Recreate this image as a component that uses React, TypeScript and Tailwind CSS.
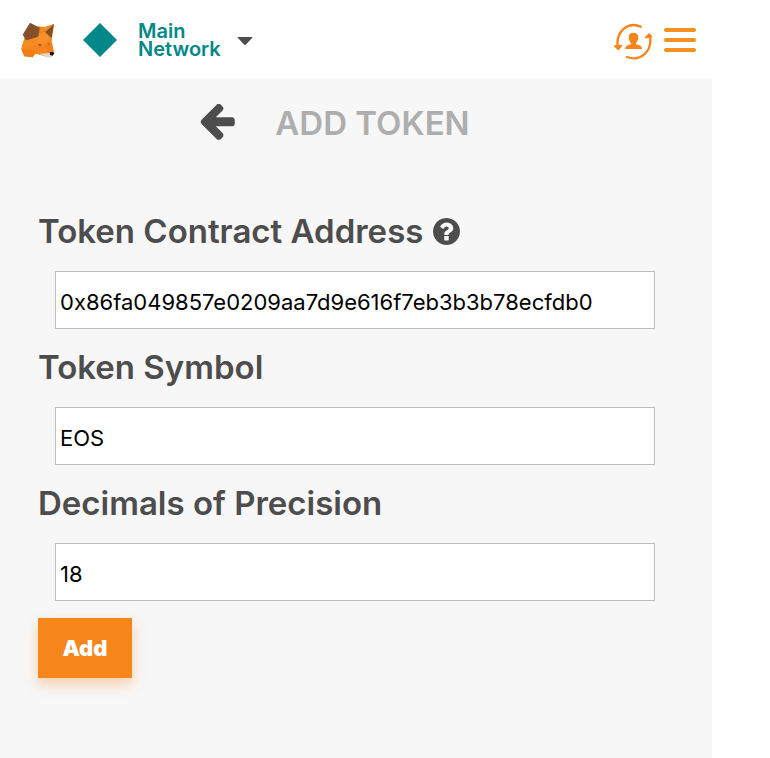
import { useState } from "react";

function FoxLogo() {
  return (
    <svg viewBox="31 35 108 108" className="h-9 w-9" role="img" aria-label="Fox">
      <polygon points="86,48 104,51 133,41 126,92 134,128 126,138 116,141 78,130 69,141 44,138 35,116 42,92 52,60" fill="#f6851b" />
      <polygon points="61,37 90,52 86,79 52,94 39,73" fill="#84502a" />
      <polygon points="133,41 125,84 103,63" fill="#854d22" />
      <polygon points="133,41 104,51 102,61 108,64" fill="#ee8a2f" />
      <polygon points="42,92 84,80 76,104 50,118 35,116" fill="#f6891f" />
      <polygon points="86,78 103,62 124,84 108,100 76,104" fill="#f88f2c" />
      <polygon points="76,104 108,100 114,126 76,124" fill="#f88420" />
      <polygon points="50,118 76,122 69,141 44,138 35,116" fill="#f37c14" />
      <polygon points="108,100 122,97 129,124 114,128" fill="#f0811e" />
      <polygon points="88,131 114,128 130,128 126,138 114,141" fill="#e4d5cc" />
      <polygon points="85,103 91,101 96,105 90,106" fill="#4a4a4c" />
      <polygon points="114,101 119,99 118,103" fill="#4a4a4c" />
      <polygon points="120,126 129,124 134,129 129,136 121,134" fill="#161616" />
    </svg>
  );
}

function AccountIcon() {
  return (
    <svg viewBox="42 39 114 114" className="h-[38px] w-[38px]" fill="none" stroke="#f6851b" aria-hidden="true">
      <path d="M122 50C86 34 47 62 53 111" strokeWidth="7" strokeLinecap="round" />
      <path d="M81 141C122 156 157 124 150 80" strokeWidth="7" strokeLinecap="round" />
      <path d="M44 108L55 118L64 107Z" fill="#f6851b" strokeWidth="5" strokeLinejoin="round" />
      <path d="M137 83L147 72L154 79Z" fill="#f6851b" strokeWidth="5" strokeLinejoin="round" />
      <path d="M86 83C86 73 91 68 100 68S115 73 115 83C115 92 108 98 107 103C116 106 126 105 126 117H76C76 105 86 106 94 103C93 98 86 92 86 83Z" fill="#f6851b" stroke="none" />
    </svg>
  );
}

function ArrowLeft() {
  return (
    <svg viewBox="0 190 1536 1600" className="h-[37px] w-9" fill="#4d4d4d" aria-hidden="true">
      <path d="M1536 896v128q0 53-32.5 90.5t-84.5 37.5h-704l293 294q38 36 38 90t-38 90l-75 76q-37 37-90 37-52 0-91-37l-651-652q-37-37-37-90 0-52 37-91l651-650q38-38 91-38 52 0 90 38l75 74q38 38 38 91t-38 91l-293 293h704q52 0 84.5 37.5t32.5 90.5z" />
    </svg>
  );
}

function HelpIcon() {
  return (
    <svg viewBox="128 128 1536 1536" className="h-[27px] w-[27px]" fill="#4d4d4d" role="img" aria-label="Help">
      <path d="M1024 1376v-192q0-14-9-23t-23-9h-192q-14 0-23 9t-9 23v192q0 14 9 23t23 9h192q14 0 23-9t9-23zm256-672q0-88-55.5-163t-138.5-116-170-41q-243 0-371 213-15 24 8 42l132 100q7 6 19 6 16 0 25-12 53-68 86-92 34-24 86-24 48 0 85.5 26t37.5 59q0 38-20 61t-68 45q-63 28-115.5 86.5t-52.5 125.5v36q0 14 9 23t23 9h192q14 0 23-9t9-23q0-19 21.5-49.5t54.5-49.5q32-18 49-28.5t46-35 44.5-48 28-60.5 12.5-81zm384 192q0 209-103 385.5t-279.5 279.5-385.5 103-385.5-103-279.5-279.5-103-385.5 103-385.5 279.5-279.5 385.5-103 385.5 103 279.5 279.5 103 385.5z" />
    </svg>
  );
}

type FieldProps = {
  id: string;
  label: string;
  initial: string;
  help?: boolean;
};

function Field({ id, label, initial, help }: FieldProps) {
  const [value, setValue] = useState(initial);
  return (
    <div className="mb-[17px]">
      <div className="mb-[19px] flex h-[42px] items-center gap-2.5">
        <label htmlFor={id} className="text-[33px] leading-10 font-semibold whitespace-nowrap">
          {label}
        </label>
        {help && <HelpIcon />}
      </div>
      <input
        id={id}
        value={value}
        onChange={(e) => setValue(e.target.value)}
        className="ml-[17px] block h-[58px] w-[calc(100%-17px)] border border-[#bfbfbf] bg-white px-1 pt-1 text-[22px] text-black outline-none"
      />
    </div>
  );
}

export default function App() {
  return (
    <div className="mr-[58px] flex min-h-screen flex-col bg-[#f7f7f7] font-['Inter','Liberation_Sans',sans-serif] text-[#4d4d4d]">
      <header className="flex h-[78px] items-center bg-white pt-0.5 pr-4 pl-5">
        <FoxLogo />
        <button type="button" className="ml-[27px] flex items-center text-left">
          <svg viewBox="0 0 34 34" className="h-[34px] w-[34px]" aria-hidden="true">
            <path d="M17 0L34 17L17 34L0 17Z" fill="#038789" />
          </svg>
          <span className="ml-[21px] w-[86px] text-[20px] leading-[18px] font-semibold text-[#038789]">
            Main Network
          </span>
          <svg viewBox="0 0 16 8" className="mt-0.5 ml-[13px] h-2 w-4" aria-hidden="true">
            <path d="M1 0H15Q16 0 15 1L9 7.5Q8 8.4 7 7.5L1 1Q0 0 1 0Z" fill="#4d4d4d" />
          </svg>
        </button>
        <button type="button" aria-label="Switch account" className="mt-1 ml-auto">
          <AccountIcon />
        </button>
        <button type="button" aria-label="Menu" className="ml-3 flex w-8 flex-col gap-1.5">
          <span className="h-1 rounded-full bg-[#f6911f]" />
          <span className="h-1 rounded-full bg-[#f6911f]" />
          <span className="h-1 rounded-full bg-[#f6911f]" />
        </button>
      </header>
      <main className="flex-1 pr-[57px] pb-20 pl-[38px]">
        <div className="flex h-[88px] items-center justify-center gap-10 pt-px pr-6">
          <button type="button" aria-label="Back">
            <ArrowLeft />
          </button>
          <h1 className="text-[33px] leading-10 font-semibold text-[#aeaeae]">ADD TOKEN</h1>
        </div>
        <form className="mt-11" onSubmit={(e) => e.preventDefault()}>
          <Field id="address" label="Token Contract Address" initial="0x86fa049857e0209aa7d9e616f7eb3b3b78ecfdb0" help />
          <Field id="symbol" label="Token Symbol" initial="EOS" />
          <Field id="decimals" label="Decimals of Precision" initial="18" />
          <button
            type="submit"
            className="h-[60px] w-[94px] bg-[#f6851b] text-[22px] font-black text-white shadow-[0_6px_12px_rgba(247,134,28,0.36)]"
          >
            Add
          </button>
        </form>
      </main>
    </div>
  );
}
